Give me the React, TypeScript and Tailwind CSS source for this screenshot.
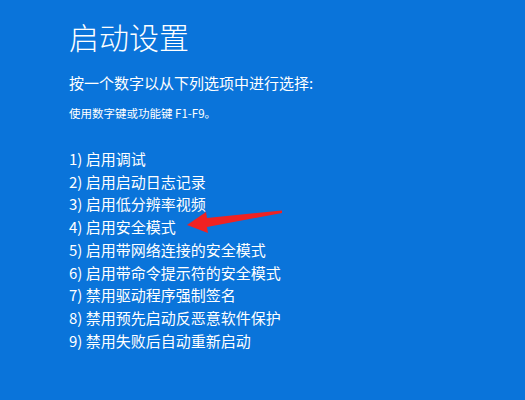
import React from "react";

const items = [
  "1) 启用调试",
  "2) 启用启动日志记录",
  "3) 启用低分辨率视频",
  "4) 启用安全模式",
  "5) 启用带网络连接的安全模式",
  "6) 启用带命令提示符的安全模式",
  "7) 禁用驱动程序强制签名",
  "8) 禁用预先启动反恶意软件保护",
  "9) 禁用失败后自动重新启动",
];

export default function App() {
  return (
    <div
      className="relative w-[525px] h-[400px] overflow-hidden bg-[#0a74da] text-white pl-[69px] pt-[17px]"
      style={{ fontFamily: '"Noto Sans CJK SC", "Noto Sans", sans-serif' }}
    >
      <h1 className="text-[30px] leading-[38px] font-light">启动设置</h1>
      <p className="mt-[18px] text-[15px] leading-[20px]">按一个数字以从下列选项中进行选择:</p>
      <p className="mt-[12px] text-[11.5px] leading-[16px]">使用数字键或功能键 F1-F9。</p>
      <ul className="mt-[27px] flex flex-col">
        {items.map((t) => (
          <li key={t} className="text-[15px] leading-[22.7px]">
            {t}
          </li>
        ))}
      </ul>
      <svg
        className="absolute left-0 top-0"
        width="525"
        height="400"
        viewBox="0 0 525 400"
      >
        <path
          d="M282 210.5 L207 218 L206 212 L187 225 L208 233 L207 227 L282 213 Z"
          fill="#f02222"
        />
      </svg>
    </div>
  );
}
